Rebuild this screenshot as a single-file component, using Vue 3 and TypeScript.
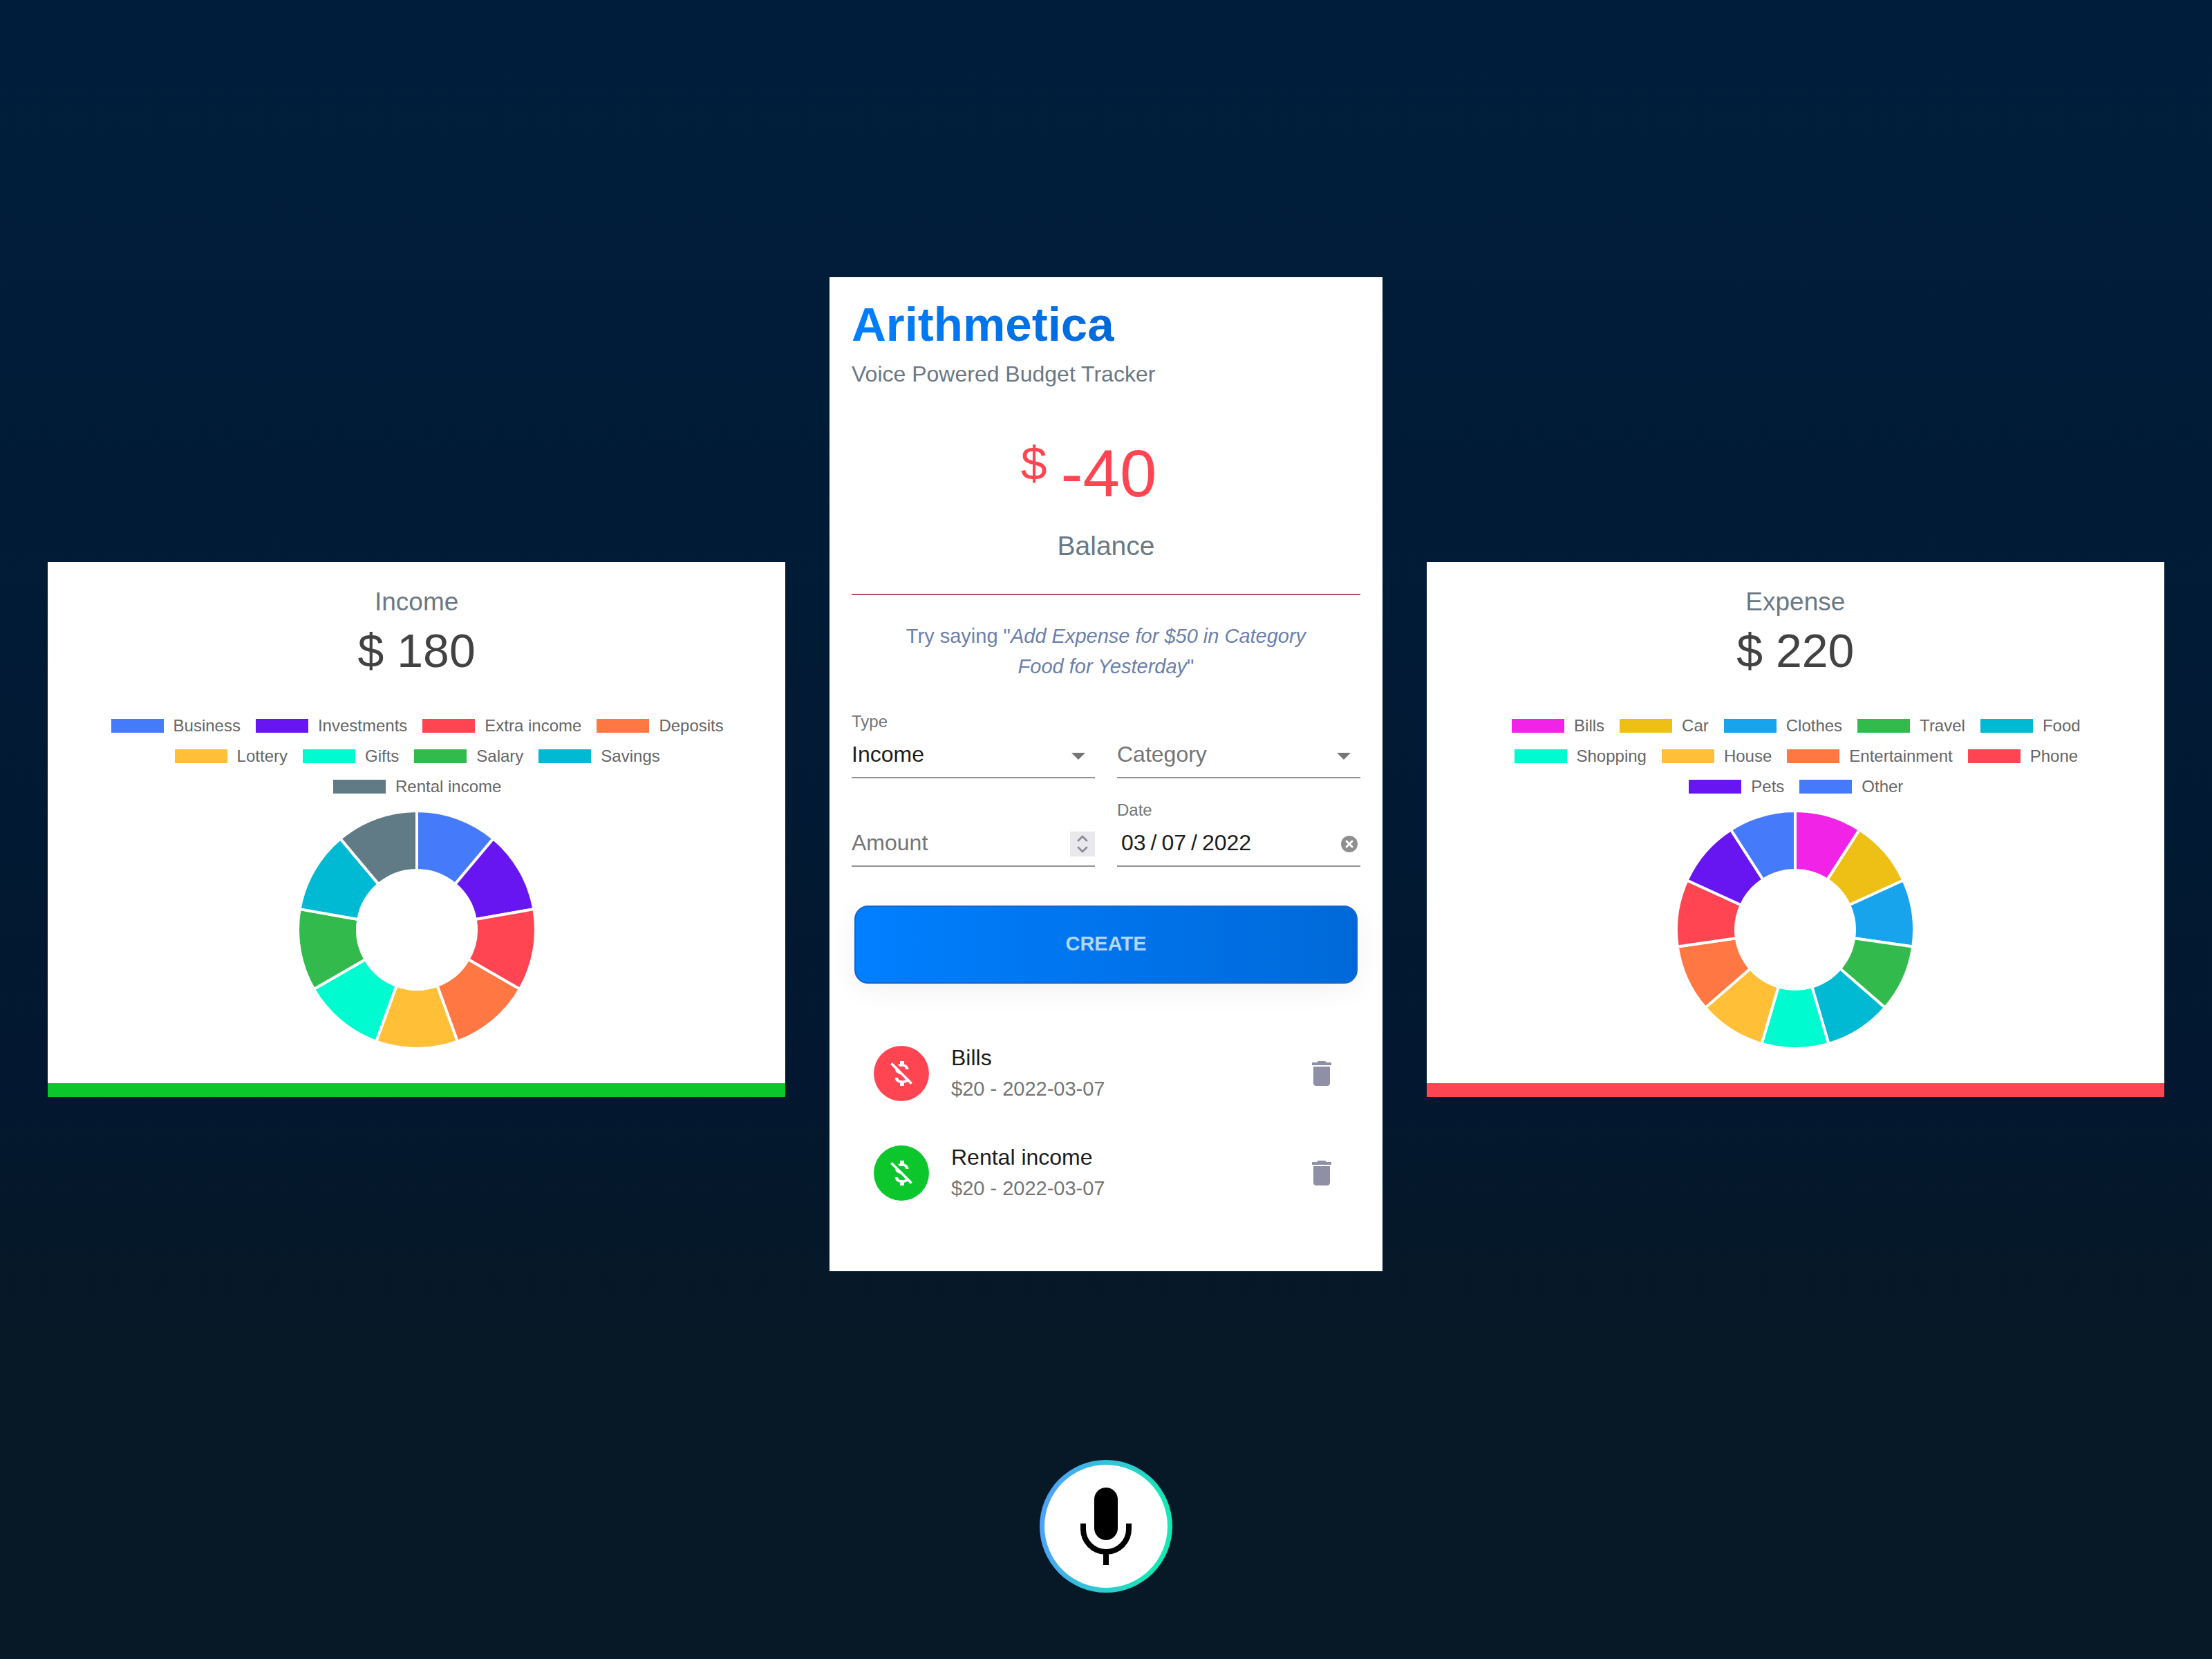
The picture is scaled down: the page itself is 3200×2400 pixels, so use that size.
<script setup lang="ts">
import { ref } from 'vue'

interface Category {
  name: string
  color: string
}

interface Summary {
  title: string
  total: number
  kind: 'income' | 'expense'
  categories: Category[]
}

interface Transaction {
  id: number
  category: string
  kind: 'income' | 'expense'
  amount: number
  date: string
}

const income: Summary = {
  title: 'Income',
  total: 180,
  kind: 'income',
  categories: [
    { name: 'Business', color: '#457bfa' },
    { name: 'Investments', color: '#6716f1' },
    { name: 'Extra income', color: '#ff4552' },
    { name: 'Deposits', color: '#ff7742' },
    { name: 'Lottery', color: '#ffc038' },
    { name: 'Gifts', color: '#00fbd0' },
    { name: 'Salary', color: '#32ba4c' },
    { name: 'Savings', color: '#00bad3' },
    { name: 'Rental income', color: '#607a86' },
  ],
}

const expense: Summary = {
  title: 'Expense',
  total: 220,
  kind: 'expense',
  categories: [
    { name: 'Bills', color: '#f023e6' },
    { name: 'Car', color: '#eec016' },
    { name: 'Clothes', color: '#18a4ec' },
    { name: 'Travel', color: '#32ba4c' },
    { name: 'Food', color: '#00bad3' },
    { name: 'Shopping', color: '#00fbd0' },
    { name: 'House', color: '#ffc038' },
    { name: 'Entertainment', color: '#ff7742' },
    { name: 'Phone', color: '#ff4552' },
    { name: 'Pets', color: '#6716f1' },
    { name: 'Other', color: '#457bfa' },
  ],
}

const summaries: Summary[] = [income, expense]

const transactions = ref<Transaction[]>([
  { id: 1, category: 'Bills', kind: 'expense', amount: 20, date: '2022-03-07' },
  { id: 2, category: 'Rental income', kind: 'income', amount: 20, date: '2022-03-07' },
])

const type = ref('Income')
const category = ref('')
const amount = ref<number | string>('')
const date = ref('2022-03-07')

const OUTER = 172
const INNER = 86

function slicePath(index: number, count: number): string {
  const start = (index / count) * 2 * Math.PI - Math.PI / 2
  const end = ((index + 1) / count) * 2 * Math.PI - Math.PI / 2
  const at = (r: number, a: number) => `${(r * Math.cos(a)).toFixed(2)} ${(r * Math.sin(a)).toFixed(2)}`
  return `M${at(OUTER, start)}A${OUTER} ${OUTER} 0 0 1 ${at(OUTER, end)}L${at(INNER, end)}A${INNER} ${INNER} 0 0 0 ${at(INNER, start)}Z`
}

function remove(id: number) {
  transactions.value = transactions.value.filter((t) => t.id !== id)
}

function step(by: number) {
  amount.value = Number(amount.value || 0) + by
}
</script>

<template>
  <main class="page">
    <section
      v-for="s in summaries"
      :key="s.title"
      class="summary"
      :class="s.kind"
    >
      <h2 class="summary-title">{{ s.title }}</h2>
      <p class="summary-total">$ {{ s.total }}</p>
      <ul class="legend">
        <li v-for="c in s.categories" :key="c.name" class="legend-item">
          <span class="swatch" :style="{ background: c.color }"></span>{{ c.name }}
        </li>
      </ul>
      <svg class="donut" viewBox="-174 -174 348 348" role="img" :aria-label="s.title + ' by category'">
        <path
          v-for="(c, i) in s.categories"
          :key="c.name"
          :d="slicePath(i, s.categories.length)"
          :fill="c.color"
          stroke="#fff"
          stroke-width="4"
        />
      </svg>
    </section>

    <section class="tracker">
      <header>
        <h1 class="brand">Arithmetica</h1>
        <p class="tagline">Voice Powered Budget Tracker</p>
      </header>

      <p class="balance"><sup>$</sup>-40</p>
      <p class="balance-label">Balance</p>
      <hr class="rule" />
      <p class="hint">Try saying "<em>Add Expense for $50 in Category Food for Yesterday</em>"</p>

      <form @submit.prevent>
        <div class="fields">
          <div class="field">
            <label for="type">Type</label>
            <div class="control">
              <select id="type" v-model="type">
                <option>Income</option>
                <option>Expense</option>
              </select>
              <svg class="arrow" viewBox="0 0 24 24" aria-hidden="true"><path d="M7 10l5 5 5-5z" /></svg>
            </div>
          </div>
          <div class="field">
            <div class="control">
              <select v-model="category" aria-label="Category" class="empty">
                <option value="">Category</option>
                <option v-for="c in income.categories" :key="c.name">{{ c.name }}</option>
              </select>
              <svg class="arrow" viewBox="0 0 24 24" aria-hidden="true"><path d="M7 10l5 5 5-5z" /></svg>
            </div>
          </div>
          <div class="field">
            <div class="control">
              <input v-model="amount" type="number" placeholder="Amount" aria-label="Amount" />
              <span class="spinner">
                <button type="button" aria-label="Increase" @click="step(1)">
                  <svg viewBox="0 0 16 8"><path d="M2 7l6-6 6 6" /></svg>
                </button>
                <button type="button" aria-label="Decrease" @click="step(-1)">
                  <svg viewBox="0 0 16 8"><path d="M2 1l6 6 6-6" /></svg>
                </button>
              </span>
            </div>
          </div>
          <div class="field">
            <label for="date">Date</label>
            <div class="control">
              <input id="date" v-model="date" type="date" />
              <button type="button" class="clear" aria-label="Clear date" @click="date = ''">
                <svg viewBox="0 0 24 24">
                  <circle cx="12" cy="12" r="12" fill="#8f8f8f" />
                  <path d="M8 8l8 8M16 8l-8 8" stroke="#fff" stroke-width="3" stroke-linecap="round" />
                </svg>
              </button>
            </div>
          </div>
        </div>
        <button type="submit" class="create">CREATE</button>
      </form>

      <ul class="list">
        <li v-for="t in transactions" :key="t.id" class="item">
          <span class="avatar" :class="t.kind">
            <svg viewBox="0 0 24 24" aria-hidden="true">
              <path d="M12.5 6.9c1.78 0 2.44.85 2.5 2.1h2.21c-.07-1.72-1.12-3.3-3.21-3.81V3h-3v2.16c-.53.12-1.03.3-1.48.54l1.47 1.47c.41-.17.91-.27 1.51-.27zM5.33 4.06L4.06 5.33 7.5 8.77c0 2.08 1.56 3.21 3.91 3.91l3.51 3.51c-.34.48-1.05.91-2.42.91-2.06 0-2.87-.92-2.98-2.1h-2.2c.12 2.19 1.76 3.42 3.68 3.83V21h3v-2.15c.96-.18 1.82-.55 2.45-1.12l2.22 2.22 1.27-1.27L5.33 4.06z" />
            </svg>
          </span>
          <div class="item-text">
            <p class="item-name">{{ t.category }}</p>
            <p class="item-detail">${{ t.amount }} - {{ t.date }}</p>
          </div>
          <button type="button" class="delete" :aria-label="'Delete ' + t.category" @click="remove(t.id)">
            <svg viewBox="0 0 24 24">
              <path d="M6 19c0 1.1.9 2 2 2h8c1.1 0 2-.9 2-2V7H6v12zM19 4h-3.5l-1-1h-5l-1 1H5v2h14V4z" />
            </svg>
          </button>
        </li>
      </ul>
    </section>

    <div class="talk">
      <button type="button" class="mic" aria-label="Hold to talk">
        <svg viewBox="0 0 80 116" aria-hidden="true">
          <rect x="23" y="2" width="34" height="76" rx="17" />
          <path d="M7 54v8a33 33 0 0 0 66 0v-8M40 95v19" fill="none" stroke="#000" stroke-width="8" />
        </svg>
      </button>
    </div>
  </main>
</template>

<style>
body {
  margin: 0;
}
</style>

<style scoped>
.page {
  --red: #ff4552;
  --green: #0bc72c;
  --slate: #6b7884;
  box-sizing: border-box;
  min-height: 100vh;
  display: flex;
  justify-content: center;
  align-items: center;
  gap: 64px;
  background: linear-gradient(180deg, #001e3c 0%, #031830 65%, #071927 80%, #071927 100%);
  font-family: 'Liberation Sans', Arial, Helvetica, sans-serif;
  color: #1c1c1c;
}

.page *,
.page *::before {
  box-sizing: border-box;
}

h1,
h2,
p,
ul {
  margin: 0;
  padding: 0;
  font-weight: 400;
  list-style: none;
}

button,
input,
select {
  margin: 0;
  padding: 0;
  border: 0;
  background: none;
  font: inherit;
  color: inherit;
  outline: 0;
}

svg {
  display: block;
}

/* Summary cards */
.summary {
  flex: 0 0 calc(100% / 3);
  display: flex;
  flex-direction: column;
  align-items: center;
  padding: 32px 32px 48px;
  background: #fff;
  border-bottom: 20px solid var(--green);
  order: 1;
}

.summary.expense {
  border-bottom-color: var(--red);
  order: 3;
}

.summary-title {
  font-size: 37px;
  line-height: 52px;
  color: var(--slate);
}

.summary-total {
  font-size: 68px;
  line-height: 88px;
  color: #424242;
}

.legend {
  max-width: 940px;
  margin-top: 53px;
  display: flex;
  flex-wrap: wrap;
  justify-content: center;
  gap: 20px;
}

.legend-item {
  display: flex;
  align-items: center;
  gap: 14px;
  padding-left: 2px;
  font-size: 24px;
  line-height: 24px;
  color: #666;
}

.swatch {
  width: 76px;
  height: 20px;
}

.donut {
  width: 348px;
  height: 348px;
  margin-top: 21px;
}

/* Tracker card */
.tracker {
  flex: 0 0 25%;
  min-width: 0;
  order: 2;
  margin-bottom: 160px;
  padding: 32px 32px 70px;
  background: #fff;
}

.brand {
  width: fit-content;
  margin-bottom: 2px;
  font-size: 69px;
  line-height: 74px;
  font-weight: 700;
  color: transparent;
  background: linear-gradient(90deg, #007fff, #0069d9);
  background-clip: text;
  -webkit-background-clip: text;
}

.tagline {
  font-size: 32px;
  line-height: 64px;
  color: var(--slate);
}

.balance {
  margin-top: 56px;
  padding-right: 50px;
  font-size: 96px;
  line-height: 112px;
  text-align: center;
  color: var(--red);
}

.balance sup {
  margin-right: 20px;
  font-size: 68px;
  line-height: 0;
  vertical-align: 24px;
}

.balance-label {
  margin-top: 26px;
  font-size: 39px;
  line-height: 46px;
  text-align: center;
  color: var(--slate);
}

.rule {
  height: 2px;
  margin: 46px 0 0;
  border: 0;
  background: #bd4c5a;
}

.hint {
  margin-top: 37px;
  padding: 0 64px;
  font-size: 29px;
  line-height: 44px;
  text-align: center;
  color: #6c80ab;
}

.fields {
  margin-top: 44px;
  display: grid;
  grid-template-columns: repeat(2, minmax(0, 1fr));
  gap: 32px;
}

.field {
  display: flex;
  flex-direction: column;
  justify-content: flex-end;
}

.field label {
  font-size: 24px;
  line-height: 28px;
  color: #757575;
}

.control {
  position: relative;
  display: flex;
  align-items: center;
  height: 68px;
  padding-top: 4px;
  border-bottom: 2px solid #949494;
}

.control select,
.control input {
  flex: 1;
  min-width: 0;
  height: 62px;
  padding-bottom: 4px;
  font-size: 32px;
  appearance: none;
}

.control .empty {
  color: #757575;
}

.control input::placeholder {
  color: #757575;
  opacity: 1;
}

.control input[type='number'] {
  appearance: textfield;
}

.control input[type='date'] {
  padding-left: 6px;
}

input::-webkit-datetime-edit-text {
  padding: 0 7px;
}

input::-webkit-datetime-edit-month-field,
input::-webkit-datetime-edit-day-field,
input::-webkit-datetime-edit-year-field {
  padding: 0;
}

input::-webkit-calendar-picker-indicator {
  display: none;
}

.arrow {
  position: absolute;
  right: 0;
  width: 48px;
  height: 48px;
  fill: #757575;
  pointer-events: none;
}

.spinner {
  display: flex;
  flex-direction: column;
  justify-content: center;
  align-items: center;
  gap: 8px;
  width: 36px;
  height: 36px;
  background: #e9e9ed;
}

.spinner svg {
  width: 16px;
  height: 8px;
  overflow: visible;
  fill: none;
  stroke: #8f8f9d;
  stroke-width: 3;
  stroke-linecap: round;
  stroke-linejoin: round;
}

.clear {
  width: 24px;
  height: 24px;
  margin-right: 4px;
}

.create {
  display: block;
  width: calc(100% - 8px);
  height: 113px;
  margin: 56px 4px 0;
  padding-bottom: 4px;
  border: 2px solid #1566cc;
  border-radius: 20px;
  background: linear-gradient(90deg, #007fff, #0069d9);
  box-shadow: 0 8px 40px rgba(0, 0, 0, 0.06);
  font-size: 29px;
  line-height: 32px;
  font-weight: 700;
  color: #b3d7fb;
}

.list {
  margin-top: 58px;
}

.item {
  display: flex;
  align-items: center;
  gap: 32px;
  height: 144px;
  padding: 0 32px;
}

.avatar {
  display: grid;
  place-items: center;
  width: 80px;
  height: 80px;
  border-radius: 50%;
  background: var(--green);
}

.avatar.expense {
  background: var(--red);
}

.avatar svg,
.delete svg {
  width: 48px;
  height: 48px;
}

.avatar svg {
  fill: #fff;
}

.item-text {
  flex: 1;
  padding-bottom: 2px;
}

.item-name {
  font-size: 32px;
  line-height: 46px;
}

.item-detail {
  font-size: 29px;
  line-height: 44px;
  color: #757575;
}

.delete svg {
  fill: #8f90a8;
}

/* Push-to-talk button, floating over the page */
.talk {
  position: fixed;
  inset: auto 0 96px;
  display: flex;
  justify-content: center;
}

.mic {
  display: grid;
  place-items: center;
  width: 192px;
  height: 192px;
  border: 7px solid transparent;
  border-radius: 50%;
  background:
    linear-gradient(#fff, #fff) padding-box,
    linear-gradient(100deg, #4fa1f9 8%, #15e8b5 85%) border-box;
}

.mic svg {
  width: 80px;
  height: 116px;
}
</style>
